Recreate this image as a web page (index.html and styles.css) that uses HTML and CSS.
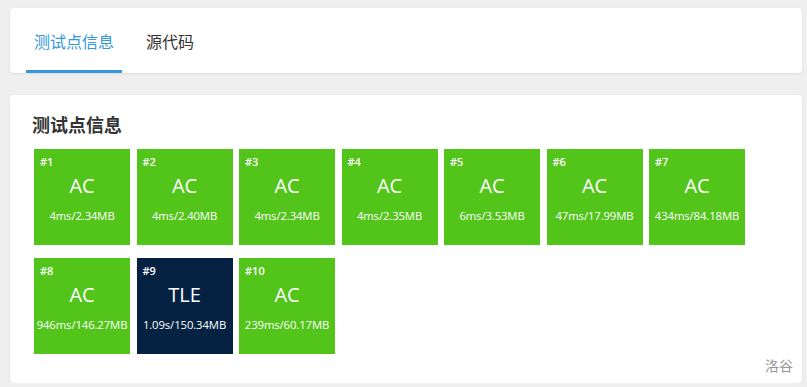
FILE: index.html
```html
<!DOCTYPE html>
<html lang="zh-CN">
<head>
    <meta charset="UTF-8">
    <title>测试点信息</title>
    <link rel="stylesheet" href="styles.css">
</head>
<body>
    <div class="card tabs-card">
        <ul class="tabs">
            <li class="tab active">测试点信息</li>
            <li class="tab">源代码</li>
        </ul>
    </div>

    <div class="card main-card">
        <h3 class="title">测试点信息</h3>
        <div class="cases">
            <div class="case ac"><span class="id">#1</span><div class="status">AC</div><div class="info">4ms/2.34MB</div></div>
            <div class="case ac"><span class="id">#2</span><div class="status">AC</div><div class="info">4ms/2.40MB</div></div>
            <div class="case ac"><span class="id">#3</span><div class="status">AC</div><div class="info">4ms/2.34MB</div></div>
            <div class="case ac"><span class="id">#4</span><div class="status">AC</div><div class="info">4ms/2.35MB</div></div>
            <div class="case ac"><span class="id">#5</span><div class="status">AC</div><div class="info">6ms/3.53MB</div></div>
            <div class="case ac"><span class="id">#6</span><div class="status">AC</div><div class="info">47ms/17.99MB</div></div>
            <div class="case ac"><span class="id">#7</span><div class="status">AC</div><div class="info">434ms/84.18MB</div></div>
            <div class="case ac"><span class="id">#8</span><div class="status">AC</div><div class="info">946ms/146.27MB</div></div>
            <div class="case tle"><span class="id">#9</span><div class="status">TLE</div><div class="info">1.09s/150.34MB</div></div>
            <div class="case ac"><span class="id">#10</span><div class="status">AC</div><div class="info">239ms/60.17MB</div></div>
        </div>
        <div class="brand">洛谷</div>
    </div>
</body>
</html>
```

FILE: styles.css
```css
body {
    margin: 0;
    padding: 8px 5px 0 10px;
    background-color: #efefef;
    font-family: "Open Sans", "Noto Sans CJK SC", sans-serif;
    color: #333;
}

.card {
    background-color: #fff;
    border-radius: 4px;
    box-shadow: 0 1px 3px rgba(0, 0, 0, 0.08);
}

.tabs-card {
    height: 65px;
    margin-bottom: 22px;
}

.tabs {
    list-style: none;
    margin: 0;
    padding: 0 0 0 16px;
    display: flex;
    height: 100%;
}

.tab {
    padding: 3px 8px 0 8px;
    margin-right: 16px;
    display: flex;
    align-items: center;
    font-size: 16px;
    color: #333;
    border-bottom: 3px solid transparent;
    box-sizing: border-box;
}

.tab.active {
    color: #3498db;
    border-bottom-color: #3498db;
}

.main-card {
    height: 288px;
    padding: 16px 22px 0 22px;
    box-sizing: border-box;
    position: relative;
}

.title {
    margin: 0 0 12px 0;
    font-size: 18px;
    font-weight: bold;
    line-height: 26px;
    font-family: "Noto Sans CJK SC", sans-serif;
}

.cases {
    display: flex;
    flex-wrap: wrap;
    column-gap: 6.5px;
    row-gap: 13px;
    padding-left: 2px;
    width: 720px;
}

.case {
    width: 96px;
    height: 96px;
    color: #fff;
    box-sizing: border-box;
    padding: 6px 0 0 0;
    text-align: center;
}

.case.ac {
    background-color: #52c41a;
}

.case.tle {
    background-color: #052242;
}

.id {
    display: block;
    text-align: left;
    padding-left: 6px;
    font-size: 11px;
    font-weight: 600;
    line-height: 14px;
}

.status {
    font-size: 20px;
    line-height: 24px;
    margin-top: 5px;
}

.info {
    font-size: 11.3px;
    line-height: 16px;
    margin-top: 10px;
    white-space: nowrap;
    letter-spacing: -0.1px;
}

.brand {
    position: absolute;
    right: 9px;
    bottom: 8px;
    font-size: 14px;
    color: #999;
    font-family: "Noto Sans CJK SC", sans-serif;
}
```
